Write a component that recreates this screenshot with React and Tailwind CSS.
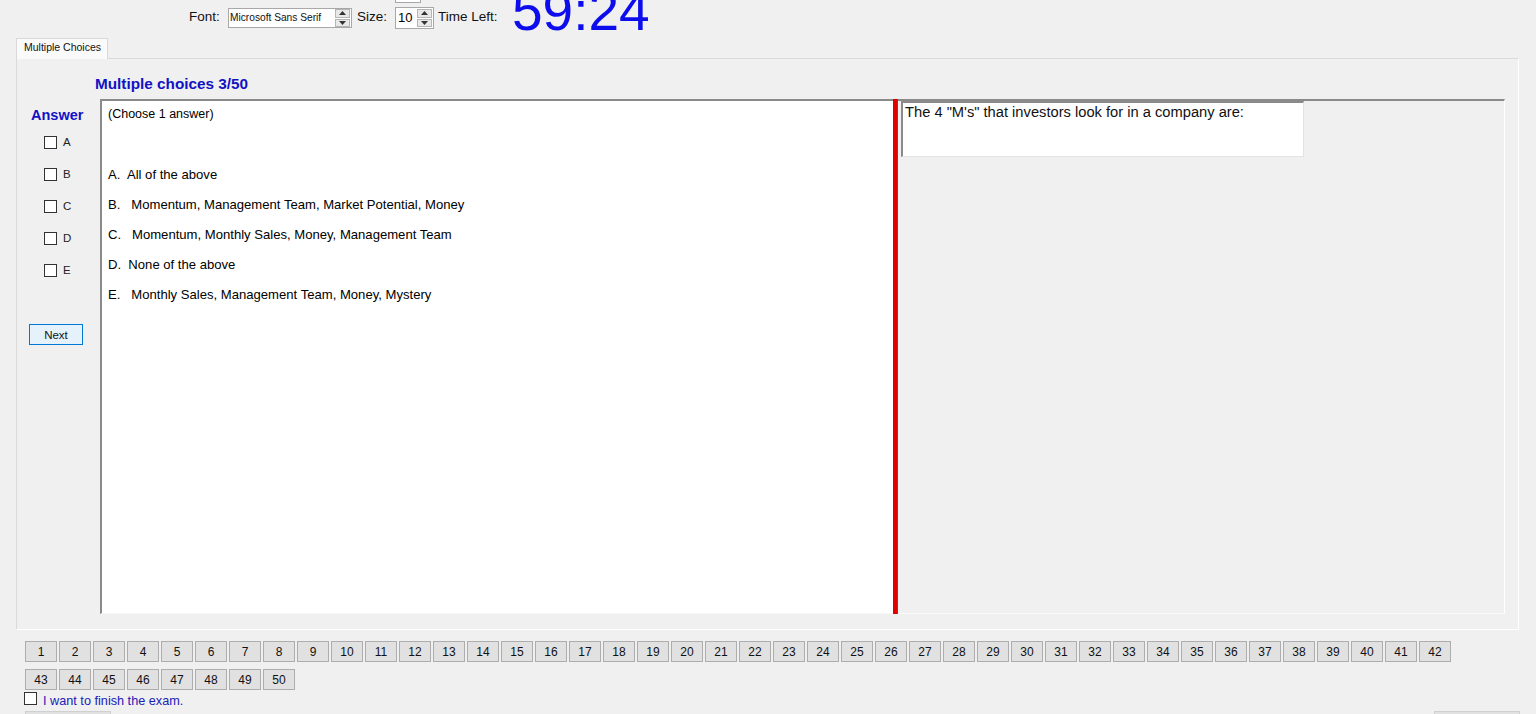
import React from "react";

const font = "font-['Liberation_Sans',Arial,sans-serif]";

function SpinArrows({ h = "h-[18px]" }) {
  return (
    <div className={`w-[15px] ${h} flex flex-col gap-px`}>
      <div className="flex-1 bg-[#e8e8e8] border border-[#b5b5b5] flex items-center justify-center">
        <svg width="7" height="4" viewBox="0 0 7 4">
          <path d="M0 4 L3.5 0 L7 4 Z" fill="#333" />
        </svg>
      </div>
      <div className="flex-1 bg-[#e8e8e8] border border-[#b5b5b5] flex items-center justify-center">
        <svg width="7" height="4" viewBox="0 0 7 4">
          <path d="M0 0 L3.5 4 L7 0 Z" fill="#333" />
        </svg>
      </div>
    </div>
  );
}

function Box() {
  return <div className="w-[13px] h-[13px] bg-white border border-[#333]" />;
}

const options = [
  "A.  All of the above",
  "B.   Momentum, Management Team, Market Potential, Money",
  "C.   Momentum, Monthly Sales, Money, Management Team",
  "D.  None of the above",
  "E.   Monthly Sales, Management Team, Money, Mystery",
];

export default function App() {
  const nums = Array.from({ length: 50 }, (_, i) => i + 1);
  return (
    <div className={`w-[1536px] h-[714px] overflow-hidden bg-[#f0f0f0] text-black ${font}`}>
      {/* top toolbar */}
      <div className="flex items-start h-[38px] pl-[189px]">
        <span className="w-[39px] mt-[9px] text-[13.5px] leading-[16px] text-[#111]">Font:</span>
        <div className="mt-[8px] w-[124px] h-[20px] border border-[#a8a8a8] bg-white flex items-center">
          <span className="flex-1 pl-[1px] text-[10.2px] leading-[12px] text-[#111]">Microsoft Sans Serif</span>
          <div className="mr-[1px]">
            <SpinArrows />
          </div>
        </div>
        <span className="ml-[5px] w-[38px] mt-[9px] text-[13.5px] leading-[16px] text-[#111]">Size:</span>
        <div className="flex flex-col">
          <div className="h-[3px] w-[26px] border-x border-b border-[#a8a8a8] bg-white" />
          <div className="mt-[4px] w-[39px] h-[22px] border border-[#a8a8a8] bg-white flex items-center">
            <span className="flex-1 pl-[2px] text-[13px] leading-[16px]">10</span>
            <div className="mr-[1px]">
              <SpinArrows h="h-[18px]" />
            </div>
          </div>
        </div>
        <span className="ml-[4px] w-[74px] mt-[9px] text-[13.5px] leading-[16px] text-[#111]">Time Left:</span>
        <span className="mt-[-16px] text-[55px] leading-[55px] text-[#0c0cec]">59:24</span>
      </div>

      {/* tab header */}
      <div className="pl-[16px] h-[21px] flex">
        <div className="relative z-10 w-[92px] h-[21px] border border-b-0 border-[#d9d9d9] bg-[#fafafa] pl-[7px] pt-[1px] text-[10.5px] leading-[14px] text-[#111]">
          Multiple Choices
        </div>
      </div>

      {/* tab page */}
      <div className="-mt-px ml-[16px] w-[1503px] h-[572px] border border-[#dadada] border-r-white border-b-white bg-[#f0f0f0] flex flex-col">
        <div className="h-[40px] pl-[78px] pt-[16px] text-[15.3px] leading-[18px] font-bold text-[#1212c4]">
          Multiple choices 3/50
        </div>
        <div className="flex h-[515px]">
          {/* answer column */}
          <div className="w-[83px] flex flex-col">
            <div className="mt-[8px] pl-[14px] h-[16px] text-[14.5px] leading-[16px] font-bold text-[#1212c4]">
              Answer
            </div>
            <div className="mt-[3px] flex flex-col">
              {["A", "B", "C", "D", "E"].map((l) => (
                <div key={l} className="h-[32px] flex items-center pl-[27px]">
                  <Box />
                  <span className="ml-[6px] text-[11.5px] leading-[14px] text-[#222]">{l}</span>
                </div>
              ))}
            </div>
            <button className="mt-[38px] ml-[12px] w-[54px] h-[21px] bg-[#e5f1fb] border border-[#0078d7] text-[11.5px] leading-[14px] text-[#111]">
              Next
            </button>
          </div>

          {/* choices text box */}
          <div className="w-[793px] h-full bg-white border-l-2 border-t-2 border-[#8a8a8a] border-b border-b-[#f7f7f7] pl-[6px] pt-[6px]">
            <div className="text-[12.5px] leading-[15px]">(Choose 1 answer)</div>
            <div className="mt-[38px] flex flex-col text-[13.1px]">
              {options.map((o) => (
                <div key={o} className="leading-[30px] whitespace-pre">
                  {o}
                </div>
              ))}
            </div>
          </div>

          {/* splitter */}
          <div className="w-[5px] h-full flex">
            <div className="w-[4px] bg-[#e00000]" />
            <div className="w-[1px] bg-[#6b4a4a]" />
          </div>

          {/* question panel */}
          <div className="w-[607px] h-full bg-[#f0f0f0] border-t-2 border-t-[#8a8a8a] border-r border-r-white border-b border-b-[#fafafa]">
            <div className="ml-[3px] w-[403px] h-[56px] bg-white border-l-2 border-t-2 border-[#8a8a8a] border-r border-b border-r-[#e3e3e3] border-b-[#e3e3e3] pl-[2px] text-[14.7px] leading-[18px] text-[#111]">
              The 4 "M's" that investors look for in a company are:
            </div>
          </div>
        </div>
      </div>

      {/* question number buttons */}
      <div className="mt-[11px] ml-[25px] w-[1428px] flex flex-wrap gap-x-[2px] gap-y-[7px]">
        {nums.map((n) => (
          <button
            key={n}
            className="w-[32px] h-[21px] bg-[#e1e1e1] border border-[#adadad] text-[12px] leading-[14px] text-[#111]"
          >
            {n}
          </button>
        ))}
      </div>

      <div className="mt-[2px] ml-[24px] flex items-center h-[13px]">
        <Box />
        <span className="ml-[6px] mt-[5px] text-[12.7px] leading-[15px] text-[#2020b8]">I want to finish the exam.</span>
      </div>

      <div className="mt-[6px] ml-[25px] w-[1495px] flex justify-between">
        <div className="w-[86px] h-[10px] bg-[#e1e1e1] border border-[#d0d0d0]" />
        <div className="w-[86px] h-[10px] bg-[#e1e1e1] border border-[#d0d0d0]" />
      </div>
    </div>
  );
}
